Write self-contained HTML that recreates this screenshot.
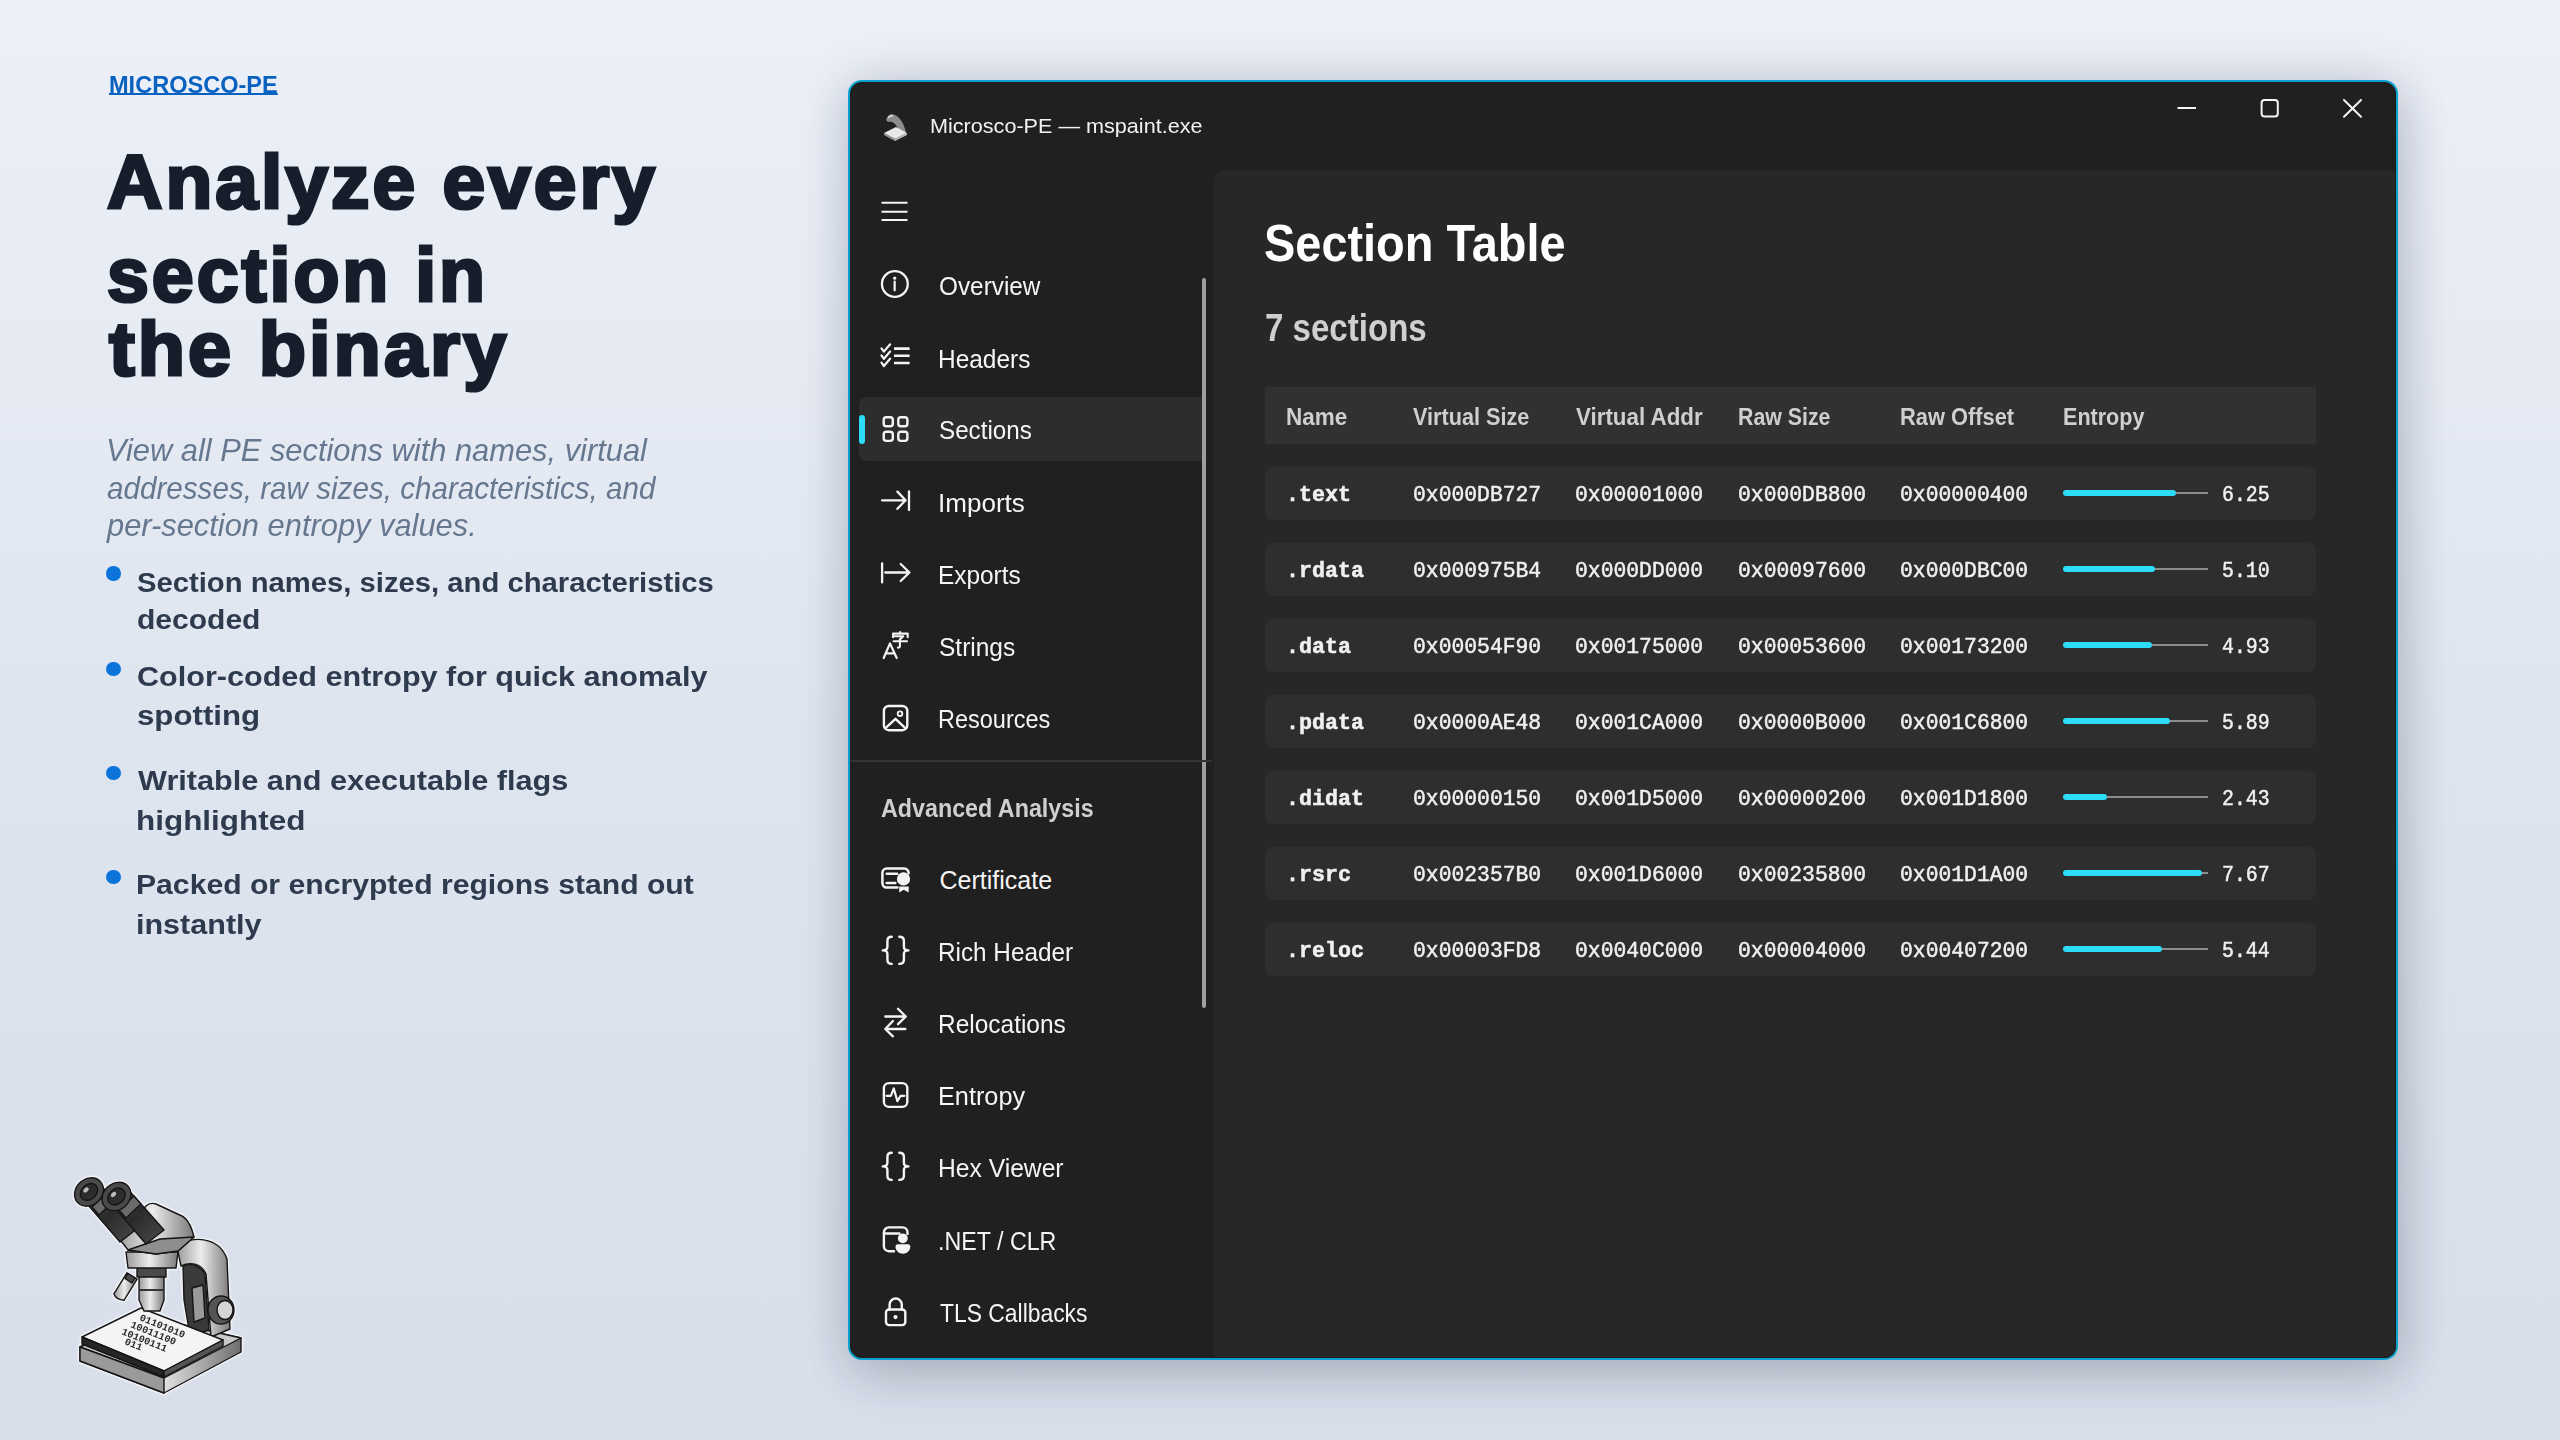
<!DOCTYPE html>
<html><head><meta charset="utf-8">
<style>
*{margin:0;padding:0;box-sizing:border-box}
html,body{width:2560px;height:1440px;overflow:hidden}
body{position:relative;font-family:"Liberation Sans",sans-serif;
background:linear-gradient(180deg,#ecf0f8 0%,#dfe5ef 50%,#d8deea 100%);}
.t{position:absolute;white-space:nowrap;line-height:1;transform-origin:0 0}
.link{font-weight:700;color:#0a62c0;text-decoration:underline;text-decoration-thickness:1.6px;text-underline-offset:0px}
.h1{font-weight:700;color:#161d2b;-webkit-text-stroke:3.2px #161d2b;letter-spacing:3px}
.sub{font-style:italic;color:#66788f}
.bul{font-weight:700;color:#2e3b4e}
.dot{position:absolute;left:106px;width:14.5px;height:14.5px;border-radius:50%;background:#0a74da}
.win{position:absolute;left:848px;top:80px;width:1550px;height:1280px;border:2px solid #06a2cd;border-radius:14px;background:#202020;overflow:hidden;
box-shadow:0 0 50px rgba(25,35,55,.16),6px 20px 50px rgba(25,35,55,.15)}
.title{color:#f2f2f2}
.nav{color:#f5f5f5}
.adv{color:#cfcfcf;font-weight:700}
.h2{color:#fff;font-weight:700}
.cnt{color:#cfcfcf;font-weight:700}
.ic{position:absolute}
.panel{position:absolute;left:364px;top:88px;width:1200px;height:1200px;background:#272727;border-top-left-radius:10px}
.sep{position:absolute;left:0;top:678px;width:362px;height:2px;background:#353535}
.sel{position:absolute;left:9px;top:315px;width:345px;height:64px;border-radius:8px 0 0 8px;background:#2d2d2d}
.ind{position:absolute;left:9px;top:333px;width:6px;height:29px;border-radius:3px;background:#2ddcf6}
.scroll{position:absolute;left:351.7px;top:196px;width:4px;height:730px;border-radius:2px;background:#9e9e9e}
.hrow{position:absolute;left:415px;top:305px;width:1051px;height:57px;background:#313131}
.row{position:absolute;width:1051px;height:53px;background:#2e2e2e;border-radius:8px}
.hd{font-weight:700;color:#cfcfcf}
.m{font-family:"Liberation Mono",monospace;color:#f0f0f0;-webkit-text-stroke:0.5px #f0f0f0}
.mb{font-weight:700}
.bar{position:absolute;height:2px;background:#8c8c8c;width:145px}
.fill{position:absolute;height:6px;border-radius:3px;background:#2ddcf6}
</style></head>
<body>
<div class="t link" style="left:108.80px;top:73.00px;font-size:24px;transform:scaleX(0.9810);">MICROSCO-PE</div>
<div class="t h1" style="left:107.40px;top:143.90px;font-size:76px;transform:scaleX(1.0092);">Analyze every</div>
<div class="t h1" style="left:106.50px;top:236.90px;font-size:76px;transform:scaleX(0.9904);">section in</div>
<div class="t h1" style="left:108.50px;top:310.90px;font-size:76px;transform:scaleX(1.0179);">the binary</div>
<div class="t sub" style="left:106.20px;top:433.80px;font-size:32px;transform:scaleX(0.9634);">View all PE sections with names, virtual</div>
<div class="t sub" style="left:106.80px;top:471.60px;font-size:32px;transform:scaleX(0.9261);">addresses, raw sizes, characteristics, and</div>
<div class="t sub" style="left:107.20px;top:509.10px;font-size:32px;transform:scaleX(0.9638);">per-section entropy values.</div>
<div class="dot" style="top:566.45px"></div>
<div class="t bul" style="left:136.70px;top:569.80px;font-size:27px;transform:scaleX(1.0827);">Section names, sizes, and characteristics</div>
<div class="t bul" style="left:136.70px;top:606.80px;font-size:27px;transform:scaleX(1.1121);">decoded</div>
<div class="dot" style="top:661.75px"></div>
<div class="t bul" style="left:136.70px;top:663.65px;font-size:27px;transform:scaleX(1.1320);">Color-coded entropy for quick anomaly</div>
<div class="t bul" style="left:136.70px;top:703.30px;font-size:27px;transform:scaleX(1.1568);">spotting</div>
<div class="dot" style="top:765.75px"></div>
<div class="t bul" style="left:137.70px;top:767.65px;font-size:27px;transform:scaleX(1.1352);">Writable and executable flags</div>
<div class="t bul" style="left:135.70px;top:807.95px;font-size:27px;transform:scaleX(1.1642);">highlighted</div>
<div class="dot" style="top:869.75px"></div>
<div class="t bul" style="left:135.70px;top:871.65px;font-size:27px;transform:scaleX(1.1165);">Packed or encrypted regions stand out</div>
<div class="t bul" style="left:135.70px;top:911.75px;font-size:27px;transform:scaleX(1.1304);">instantly</div>
<svg style="position:absolute;left:40px;top:1140px;filter:drop-shadow(0 0 1.2px #fff) drop-shadow(0 0 1px #fff)" width="260" height="280" viewBox="0 0 260 280">
<defs>
<linearGradient id="gm" x1="0" y1="0" x2="1" y2="0"><stop offset="0" stop-color="#9a9a9a"/><stop offset=".45" stop-color="#ececec"/><stop offset="1" stop-color="#7a7a7a"/></linearGradient>
<linearGradient id="gb" x1="0" y1="0" x2="1" y2="0"><stop offset="0" stop-color="#8c8c8c"/><stop offset=".5" stop-color="#e6e6e6"/><stop offset="1" stop-color="#6e6e6e"/></linearGradient>
<linearGradient id="gd" x1="0" y1="0" x2="1" y2="1"><stop offset="0" stop-color="#5a5a5a"/><stop offset=".5" stop-color="#2a2a2a"/><stop offset="1" stop-color="#4a4a4a"/></linearGradient>
</defs>
<g stroke="#151515" stroke-width="1.4" stroke-linejoin="round">
<!-- base slab -->
<path d="M40 207L104 176L201 198L201 212L124 253L40 221Z" fill="url(#gb)"/>
<path d="M40 207L104 176L201 198L124 238Z" fill="#c9c9c9"/>
<path d="M40 207L124 238L124 253L40 221Z" fill="#9a9a9a"/>
<!-- arm -->
<path d="M137 107C150 95 179 96 187 119L190 189L171 197L166 134C162 124 151 121 141 126Z" fill="url(#gm)"/>
<path d="M143 126C151 122 161 126 165 134L169 190L150 196L144 160Z" fill="#3a3a3a"/><path d="M152 148L163 145L165 178L154 182Z" fill="#9a9a9a"/>
<!-- slide -->
<path d="M42 197L101 168L183 200L124 231Z" fill="#f4f4f4"/>
<path d="M42 197L124 231L124 237L42 204Z" fill="#262626"/>
<path d="M124 231L183 200L183 206L124 237Z" fill="#555"/>
<!-- focus knob -->
<ellipse cx="181" cy="170" rx="13" ry="14" fill="#555"/>
<ellipse cx="185" cy="170" rx="8" ry="9.5" fill="#d6d6d6"/>
<!-- side objective -->
<path d="M97.1 139.2L86.9 132.8L73.9 153.8Q76 160 84.1 160.2Z" fill="url(#gm)"/><path d="M95 138L88 133.5L85 138.5L92 143Z" fill="#4a4a4a"/>
<!-- main objective -->
<path d="M99 128H124V160L120 171H104L99 160Z" fill="url(#gm)"/>
<path d="M97 127H126V137H97Z" fill="#4a4a4a"/><path d="M99 150H124" stroke="#333" stroke-width="2"/>
<!-- nosepiece -->
<path d="M86 112H138L136 128H88Z" fill="url(#gm)"/>
<!-- head -->
<path d="M78 97L106 66Q110 62 116 64L142 76Q148 79 152 90L154 97L138 111L116 114L88 110Z" fill="url(#gm)"/>
<path d="M88 110L116 114L138 111L154 97L120 99Z" fill="#8e8e8e"/>
</g>
<g stroke="#151515" stroke-width="1.4">
<!-- eyepiece tubes -->
<path d="M42 58L58 42L98 88L80 102Z" fill="url(#gd)"/>
<path d="M69 61L85 46L124 90L106 104Z" fill="url(#gd)"/>
<path d="M52 67L67 53L74 61L59 75Z" fill="#6a6a6a"/>
<path d="M79 70L94 56L101 64L86 78Z" fill="#6a6a6a"/>
<ellipse cx="49" cy="52" rx="15.5" ry="13" transform="rotate(-42 49 52)" fill="#4a4a4a"/>
<ellipse cx="49" cy="52" rx="9.5" ry="7.5" transform="rotate(-42 49 52)" fill="#2c2c2c"/>
<ellipse cx="76.5" cy="56.5" rx="15.5" ry="13" transform="rotate(-42 76.5 56.5)" fill="#4a4a4a"/>
<ellipse cx="76.5" cy="56.5" rx="9.5" ry="7.5" transform="rotate(-42 76.5 56.5)" fill="#2c2c2c"/>
</g>
<ellipse cx="46" cy="50" rx="3" ry="2" transform="rotate(-42 46 50)" fill="#bdbdbd"/>
<ellipse cx="73.5" cy="54.5" rx="3" ry="2" transform="rotate(-42 73.5 54.5)" fill="#bdbdbd"/>
<g font-family="Liberation Mono" font-weight="700" font-size="10" fill="#2a2a2a">
<text transform="translate(99 180) rotate(22)">01101010</text>
<text transform="translate(90 187) rotate(22)">10011100</text>
<text transform="translate(81 194) rotate(22)">10100111</text>
<text transform="translate(84 204) rotate(22)">011</text>
</g>
</svg>

<div class="win">
<div class="panel"></div><div style="position:absolute;left:0;top:0;right:0;bottom:0;border:1px solid #231b1b;border-radius:12px;pointer-events:none;z-index:5"></div>
<div class="sel"></div><div class="ind"></div>
<div class="scroll"></div>
<div class="sep"></div>
<div class="hrow"></div>
<div class="t title" style="left:80.00px;top:33.58px;font-size:20.5px;transform:scaleX(1.0538);">Microsco-PE — mspaint.exe</div>
<div class="t nav" style="left:88.50px;top:192.35px;font-size:25px;transform:scaleX(0.9733);">Overview</div>
<div class="t nav" style="left:87.50px;top:264.55px;font-size:25px;transform:scaleX(0.9774);">Headers</div>
<div class="t nav" style="left:88.50px;top:336.15px;font-size:25px;transform:scaleX(0.9681);">Sections</div>
<div class="t nav" style="left:87.50px;top:408.75px;font-size:25px;transform:scaleX(1.0422);">Imports</div>
<div class="t nav" style="left:87.50px;top:480.95px;font-size:25px;transform:scaleX(0.9761);">Exports</div>
<div class="t nav" style="left:88.50px;top:552.55px;font-size:25px;transform:scaleX(0.9795);">Strings</div>
<div class="t nav" style="left:87.50px;top:624.75px;font-size:25px;transform:scaleX(0.9395);">Resources</div>
<div class="t nav" style="left:89.50px;top:786.15px;font-size:25px;">Certificate</div>
<div class="t nav" style="left:87.50px;top:858.15px;font-size:25px;transform:scaleX(0.9719);">Rich Header</div>
<div class="t nav" style="left:87.50px;top:930.35px;font-size:25px;transform:scaleX(0.9784);">Relocations</div>
<div class="t nav" style="left:87.50px;top:1002.05px;font-size:25px;transform:scaleX(1.0110);">Entropy</div>
<div class="t nav" style="left:87.50px;top:1074.25px;font-size:25px;transform:scaleX(0.9859);">Hex Viewer</div>
<div class="t nav" style="left:87.50px;top:1146.95px;font-size:25px;transform:scaleX(0.9298);">.NET / CLR</div>
<div class="t nav" style="left:89.50px;top:1218.95px;font-size:25px;transform:scaleX(0.9151);">TLS Callbacks</div>
<div class="t adv" style="left:31.40px;top:712.90px;font-size:26px;transform:scaleX(0.8954);">Advanced Analysis</div>
<div class="t h2" style="left:414.00px;top:134.80px;font-size:52px;transform:scaleX(0.9021);">Section Table</div>
<div class="t cnt" style="left:414.50px;top:227.00px;font-size:38px;transform:scaleX(0.8702);">7 sections</div>
<div class="t hd" style="left:436.20px;top:323.65px;font-size:23px;transform:scaleX(0.9789);">Name</div>
<div class="t hd" style="left:563.00px;top:323.65px;font-size:23px;transform:scaleX(0.9408);">Virtual Size</div>
<div class="t hd" style="left:726.00px;top:323.65px;font-size:23px;transform:scaleX(0.9716);">Virtual Addr</div>
<div class="t hd" style="left:887.80px;top:323.65px;font-size:23px;transform:scaleX(0.9268);">Raw Size</div>
<div class="t hd" style="left:1050.00px;top:323.65px;font-size:23px;transform:scaleX(0.9496);">Raw Offset</div>
<div class="t hd" style="left:1212.80px;top:323.65px;font-size:23px;transform:scaleX(0.9374);">Entropy</div>
<div class="row" style="left:415px;top:385.2px"></div>
<div class="t m mb" style="left:436.20px;top:403.28px;font-size:22px;transform:scaleX(0.9851);">.text</div>
<div class="t m" style="left:562.60px;top:403.28px;font-size:22px;transform:scaleX(0.9707);">0x000DB727</div>
<div class="t m" style="left:725.10px;top:403.28px;font-size:22px;transform:scaleX(0.9707);">0x00001000</div>
<div class="t m" style="left:887.70px;top:403.28px;font-size:22px;transform:scaleX(0.9707);">0x000DB800</div>
<div class="t m" style="left:1050.10px;top:403.28px;font-size:22px;transform:scaleX(0.9707);">0x00000400</div>
<div class="bar" style="left:1213px;top:410.4px"></div>
<div class="fill" style="left:1213px;top:408.4px;width:113.3px"></div>
<div class="t m" style="left:1371.50px;top:403.28px;font-size:22px;transform:scaleX(0.9023);">6.25</div>
<div class="row" style="left:415px;top:461.2px"></div>
<div class="t m mb" style="left:436.20px;top:479.28px;font-size:22px;transform:scaleX(0.9851);">.rdata</div>
<div class="t m" style="left:562.60px;top:479.28px;font-size:22px;transform:scaleX(0.9707);">0x000975B4</div>
<div class="t m" style="left:725.10px;top:479.28px;font-size:22px;transform:scaleX(0.9707);">0x000DD000</div>
<div class="t m" style="left:887.70px;top:479.28px;font-size:22px;transform:scaleX(0.9707);">0x00097600</div>
<div class="t m" style="left:1050.10px;top:479.28px;font-size:22px;transform:scaleX(0.9707);">0x000DBC00</div>
<div class="bar" style="left:1213px;top:486.4px"></div>
<div class="fill" style="left:1213px;top:484.4px;width:92.4px"></div>
<div class="t m" style="left:1371.50px;top:479.28px;font-size:22px;transform:scaleX(0.9023);">5.10</div>
<div class="row" style="left:415px;top:537.2px"></div>
<div class="t m mb" style="left:436.20px;top:555.28px;font-size:22px;transform:scaleX(0.9851);">.data</div>
<div class="t m" style="left:562.60px;top:555.28px;font-size:22px;transform:scaleX(0.9707);">0x00054F90</div>
<div class="t m" style="left:725.10px;top:555.28px;font-size:22px;transform:scaleX(0.9707);">0x00175000</div>
<div class="t m" style="left:887.70px;top:555.28px;font-size:22px;transform:scaleX(0.9707);">0x00053600</div>
<div class="t m" style="left:1050.10px;top:555.28px;font-size:22px;transform:scaleX(0.9707);">0x00173200</div>
<div class="bar" style="left:1213px;top:562.4px"></div>
<div class="fill" style="left:1213px;top:560.4px;width:89.4px"></div>
<div class="t m" style="left:1371.50px;top:555.28px;font-size:22px;transform:scaleX(0.9023);">4.93</div>
<div class="row" style="left:415px;top:613.2px"></div>
<div class="t m mb" style="left:436.20px;top:631.28px;font-size:22px;transform:scaleX(0.9851);">.pdata</div>
<div class="t m" style="left:562.60px;top:631.28px;font-size:22px;transform:scaleX(0.9707);">0x0000AE48</div>
<div class="t m" style="left:725.10px;top:631.28px;font-size:22px;transform:scaleX(0.9707);">0x001CA000</div>
<div class="t m" style="left:887.70px;top:631.28px;font-size:22px;transform:scaleX(0.9707);">0x0000B000</div>
<div class="t m" style="left:1050.10px;top:631.28px;font-size:22px;transform:scaleX(0.9707);">0x001C6800</div>
<div class="bar" style="left:1213px;top:638.4px"></div>
<div class="fill" style="left:1213px;top:636.4px;width:106.8px"></div>
<div class="t m" style="left:1371.50px;top:631.28px;font-size:22px;transform:scaleX(0.9023);">5.89</div>
<div class="row" style="left:415px;top:689.2px"></div>
<div class="t m mb" style="left:436.20px;top:707.28px;font-size:22px;transform:scaleX(0.9851);">.didat</div>
<div class="t m" style="left:562.60px;top:707.28px;font-size:22px;transform:scaleX(0.9707);">0x00000150</div>
<div class="t m" style="left:725.10px;top:707.28px;font-size:22px;transform:scaleX(0.9707);">0x001D5000</div>
<div class="t m" style="left:887.70px;top:707.28px;font-size:22px;transform:scaleX(0.9707);">0x00000200</div>
<div class="t m" style="left:1050.10px;top:707.28px;font-size:22px;transform:scaleX(0.9707);">0x001D1800</div>
<div class="bar" style="left:1213px;top:714.4px"></div>
<div class="fill" style="left:1213px;top:712.4px;width:44.0px"></div>
<div class="t m" style="left:1371.50px;top:707.28px;font-size:22px;transform:scaleX(0.9023);">2.43</div>
<div class="row" style="left:415px;top:765.2px"></div>
<div class="t m mb" style="left:436.20px;top:783.28px;font-size:22px;transform:scaleX(0.9851);">.rsrc</div>
<div class="t m" style="left:562.60px;top:783.28px;font-size:22px;transform:scaleX(0.9707);">0x002357B0</div>
<div class="t m" style="left:725.10px;top:783.28px;font-size:22px;transform:scaleX(0.9707);">0x001D6000</div>
<div class="t m" style="left:887.70px;top:783.28px;font-size:22px;transform:scaleX(0.9707);">0x00235800</div>
<div class="t m" style="left:1050.10px;top:783.28px;font-size:22px;transform:scaleX(0.9707);">0x001D1A00</div>
<div class="bar" style="left:1213px;top:790.4px"></div>
<div class="fill" style="left:1213px;top:788.4px;width:139.0px"></div>
<div class="t m" style="left:1371.50px;top:783.28px;font-size:22px;transform:scaleX(0.9023);">7.67</div>
<div class="row" style="left:415px;top:841.2px"></div>
<div class="t m mb" style="left:436.20px;top:859.28px;font-size:22px;transform:scaleX(0.9851);">.reloc</div>
<div class="t m" style="left:562.60px;top:859.28px;font-size:22px;transform:scaleX(0.9707);">0x00003FD8</div>
<div class="t m" style="left:725.10px;top:859.28px;font-size:22px;transform:scaleX(0.9707);">0x0040C000</div>
<div class="t m" style="left:887.70px;top:859.28px;font-size:22px;transform:scaleX(0.9707);">0x00004000</div>
<div class="t m" style="left:1050.10px;top:859.28px;font-size:22px;transform:scaleX(0.9707);">0x00407200</div>
<div class="bar" style="left:1213px;top:866.4px"></div>
<div class="fill" style="left:1213px;top:864.4px;width:98.6px"></div>
<div class="t m" style="left:1371.50px;top:859.28px;font-size:22px;transform:scaleX(0.9023);">5.44</div>
<svg class="ic" style="left:20px;top:108px" width="50" height="50" viewBox="0 0 50 50" fill="none" stroke="#f4f4f4" stroke-width="2.3" stroke-linecap="round" stroke-linejoin="round"><path d="M11.5 12.8H37.5M11.5 21.7H37.5M11.5 30H37.5" stroke-width="2" stroke-linecap="butt"/></svg>
<svg class="ic" style="left:20px;top:178px" width="50" height="50" viewBox="0 0 50 50" fill="none" stroke="#f4f4f4" stroke-width="2.3" stroke-linecap="round" stroke-linejoin="round"><circle cx="24.85" cy="23.95" r="12.9"/><path d="M24.65 21.6V30.3" stroke-width="2.2"/><circle cx="24.65" cy="18.2" r="1.6" fill="#f4f4f4" stroke="none"/></svg>
<svg class="ic" style="left:20px;top:250px" width="50" height="50" viewBox="0 0 50 50" fill="none" stroke="#f4f4f4" stroke-width="2.2" stroke-linecap="round" stroke-linejoin="round"><path d="M11.5 16.3L13.9 19.6L20.1 12.3"/><path d="M11.5 23.5L13.9 26.8L20.1 19.5"/><path d="M11.5 30.700000000000003L13.9 34.0L20.1 26.700000000000003"/><path d="M24 16.6H39.6M24 23.8H39.6M24 31H39.6" stroke-width="2.6" stroke-linecap="butt"/></svg>
<svg class="ic" style="left:20px;top:322px" width="50" height="50" viewBox="0 0 50 50" fill="none" stroke="#f4f4f4" stroke-width="2.4" stroke-linecap="round" stroke-linejoin="round"><rect x="13.7" y="13.2" width="9.1" height="9.1" rx="2.6"/><rect x="13.7" y="27.8" width="9.1" height="9.1" rx="2.6"/><rect x="28.3" y="13.2" width="9.1" height="9.1" rx="2.6"/><rect x="28.3" y="27.8" width="9.1" height="9.1" rx="2.6"/></svg>
<svg class="ic" style="left:20px;top:394px" width="50" height="50" viewBox="0 0 50 50" fill="none" stroke="#f4f4f4" stroke-width="2.3" stroke-linecap="round" stroke-linejoin="round"><path d="M12 24.3H35.2M27.4 15.6L35.6 24.3L27.4 32.8M39 15.3V34"/></svg>
<svg class="ic" style="left:20px;top:466px" width="50" height="50" viewBox="0 0 50 50" fill="none" stroke="#f4f4f4" stroke-width="2.3" stroke-linecap="round" stroke-linejoin="round"><path d="M12.1 15.3V34.4M15.3 24.5H39.2M30.7 16L39.4 24.5L30.7 33"/></svg>
<svg class="ic" style="left:20px;top:538px" width="50" height="50" viewBox="0 0 50 50" fill="none" stroke="#f4f4f4" stroke-width="2.2" stroke-linecap="round" stroke-linejoin="round"><path d="M13.7 38L20 23.4L26.7 38M16.3 33.4H24.5"/><path d="M30.2 12V13.6M23.1 17.2V13.6H37.7V17.2M25 16.3H33.3L29.9 19.4V26.2Q29.9 27.6 27.9 27.6M23.6 21.2H37" stroke-width="2.1"/></svg>
<svg class="ic" style="left:20px;top:610px" width="50" height="50" viewBox="0 0 50 50" fill="none" stroke="#f4f4f4" stroke-width="2.4" stroke-linecap="round" stroke-linejoin="round"><rect x="13.9" y="14" width="23.4" height="24.2" rx="5"/><circle cx="30" cy="21.7" r="2.3" stroke-width="1.9"/><path d="M15.2 36.4L25.5 26.8L35.6 36.4"/></svg>
<svg class="ic" style="left:20px;top:770px" width="50" height="50" viewBox="0 0 50 50" fill="none" stroke="#f4f4f4" stroke-width="2.5" stroke-linecap="round" stroke-linejoin="round"><path d="M27.4 35.5H16.6A4.2 4.2 0 0 1 12.4 31.3V20.8A4.2 4.2 0 0 1 16.6 16.6H34.4A4.2 4.2 0 0 1 38.6 20.8V21.2"/><path d="M16.7 21.7H27.1M16.7 31.1H25.3" stroke-width="2.5"/><circle cx="33.5" cy="26.9" r="6.6" fill="#f4f4f4" stroke="none"/><path d="M29.2 34.5H38.7V40.6L33.8 37.8L29.2 40.6Z" fill="#f4f4f4" stroke="none"/></svg>
<svg class="ic" style="left:20px;top:842px" width="50" height="50" viewBox="0 0 50 50" fill="none" stroke="#f4f4f4" stroke-width="2.4" stroke-linecap="round" stroke-linejoin="round"><path d="M21.7 12.8Q17.4 12.8 17.4 17V22.8Q17.4 26.4 12.8 26.4Q17.4 26.4 17.4 30V35.7Q17.4 39.9 21.7 39.9"/><path d="M29.3 12.8Q33.9 12.8 33.9 17V22.8Q33.9 26.4 38.4 26.4Q33.9 26.4 33.9 30V35.7Q33.9 39.9 29.3 39.9"/></svg>
<svg class="ic" style="left:20px;top:1058px" width="50" height="50" viewBox="0 0 50 50" fill="none" stroke="#f4f4f4" stroke-width="2.4" stroke-linecap="round" stroke-linejoin="round"><path d="M21.7 12.8Q17.4 12.8 17.4 17V22.8Q17.4 26.4 12.8 26.4Q17.4 26.4 17.4 30V35.7Q17.4 39.9 21.7 39.9"/><path d="M29.3 12.8Q33.9 12.8 33.9 17V22.8Q33.9 26.4 38.4 26.4Q33.9 26.4 33.9 30V35.7Q33.9 39.9 29.3 39.9"/></svg>
<svg class="ic" style="left:20px;top:914px" width="50" height="50" viewBox="0 0 50 50" fill="none" stroke="#f4f4f4" stroke-width="2.3" stroke-linecap="round" stroke-linejoin="round"><path d="M15.3 20.5H35.6M28 12.8L35.8 20.5L28 28.1M35.4 33H15.5M22.9 25L15.3 33L22.9 40.3"/></svg>
<svg class="ic" style="left:20px;top:986px" width="50" height="50" viewBox="0 0 50 50" fill="none" stroke="#f4f4f4" stroke-width="2.4" stroke-linecap="round" stroke-linejoin="round"><rect x="13.9" y="15.1" width="23.4" height="23.8" rx="5"/><path d="M16.5 27.8H20.8L23.8 20.5L27.4 33.3L30.6 27.8H34.4" stroke-width="2.2"/></svg>
<svg class="ic" style="left:20px;top:1131px" width="50" height="50" viewBox="0 0 50 50" fill="none" stroke="#f4f4f4" stroke-width="2.4" stroke-linecap="round" stroke-linejoin="round"><path d="M24 38.2H18.9A5 5 0 0 1 13.9 33.2V19.4A5 5 0 0 1 18.9 14.4H32.5A5 5 0 0 1 37.5 19.4V21"/><path d="M13.9 20.5H29.5" stroke-width="2.3"/><circle cx="32.8" cy="25.3" r="4.9" fill="#f4f4f4" stroke="none"/><path d="M25.5 33.6Q25.5 31.3 28 31.3H37.8Q40.3 31.3 40.3 33.6C40.3 38.3 36.6 40.8 32.9 40.8C29.2 40.8 25.5 38.3 25.5 33.6Z" fill="#f4f4f4" stroke="none"/></svg>
<svg class="ic" style="left:20px;top:1203px" width="50" height="50" viewBox="0 0 50 50" fill="none" stroke="#f4f4f4" stroke-width="2.4" stroke-linecap="round" stroke-linejoin="round"><rect x="16" y="24.5" width="19.3" height="15.6" rx="3"/><path d="M19.6 24.5V19.6A6.1 6.1 0 0 1 31.8 19.6V24.5"/><circle cx="25.5" cy="32.1" r="2.1" fill="#f4f4f4" stroke="none"/></svg>
<svg class="ic" style="left:32px;top:24px" width="30" height="36" viewBox="0 0 30 36"><path d="M4 14Q7 6 13 9Q19 12 22 20L24 26L19 28L14 19Q10 14 6 16Z" fill="#8c8c8c"/><path d="M6 12Q8 9 11 10" stroke="#d0d0d0" stroke-width="2" fill="none"/><path d="M2 27L14 21L25 27L13 33Z" fill="#e8e8e8"/><path d="M2 27L13 33L13 35L2 29Z" fill="#9a9a9a"/><path d="M13 33L25 27L25 29L13 35Z" fill="#bdbdbd"/></svg>
<svg class="ic" style="left:1320px;top:8px" width="40" height="40" viewBox="0 0 40 40" fill="none" stroke="#f4f4f4" stroke-width="2.3" stroke-linecap="round" stroke-linejoin="round"><path d="M7.5 18H26" stroke-width="2" stroke-linecap="butt"/></svg>
<svg class="ic" style="left:1400px;top:8px" width="40" height="40" viewBox="0 0 40 40" fill="none" stroke="#f4f4f4" stroke-width="2" stroke-linecap="round" stroke-linejoin="round"><rect x="11.6" y="10" width="16.2" height="16.6" rx="3"/></svg>
<svg class="ic" style="left:1485px;top:8px" width="40" height="40" viewBox="0 0 40 40" fill="none" stroke="#f4f4f4" stroke-width="2" stroke-linecap="round" stroke-linejoin="round"><path d="M9 10L26 26.8M26 10L9 26.8"/></svg>

</div>
</body></html>
